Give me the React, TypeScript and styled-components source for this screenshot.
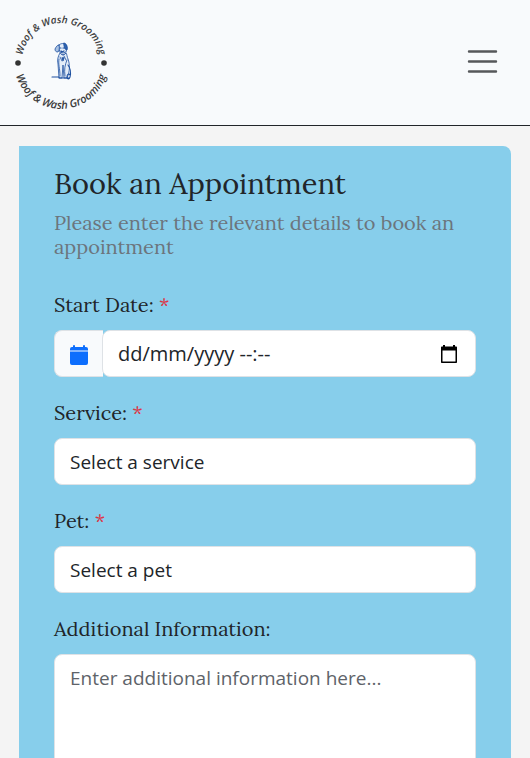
import React from "react";
import styled, { createGlobalStyle, css } from "styled-components";

const serif = `Lora, "Liberation Serif", serif`;
const sans = `"Segoe UI", "Open Sans", "Noto Sans", sans-serif`;

const GlobalStyle = createGlobalStyle`
  *, *::before, *::after { box-sizing: border-box; }
  body {
    margin: 0;
    background: #f4f4f4;
    color: #212529;
    font-family: ${serif};
  }
`;

const Header = styled.header`
  display: flex;
  align-items: center;
  justify-content: space-between;
  padding: 0 32px 2px 11px;
  height: 126px;
  background: #f8fafc;
  border-bottom: 1px solid #212529;
`;

const LogoLink = styled.a`
  display: block;
  line-height: 0;
`;

const LogoText = styled.text`
  font-family: "Open Sans", sans-serif;
  font-weight: 600;
  font-style: italic;
  fill: #3c3c3c;
`;

const MenuButton = styled.button`
  display: flex;
  padding: 0;
  border: 0;
  background: transparent;
  cursor: pointer;
`;

const Main = styled.main`
  padding: 20px 19px;
`;

const Card = styled.form`
  padding: 20px 35px 35px;
  background: #87ceeb;
  border-radius: 0 8px 8px 0;
`;

const Title = styled.h2`
  margin: 0 0 9px;
  font-size: 29px;
  font-weight: 400;
  line-height: 36px;
`;

const Subtitle = styled.p`
  margin: 0 0 31px;
  font-size: 20px;
  line-height: 24px;
  color: #6c757d;
`;

const Field = styled.div`
  margin-bottom: 21px;
`;

const Label = styled.label`
  display: block;
  margin-bottom: 10px;
  font-size: 20px;
  line-height: 30px;
`;

const Required = styled.span`
  color: #dc3545;
`;

const control = css`
  display: block;
  width: 100%;
  height: 47px;
  margin: 0;
  padding: 8px 15px;
  border: 1px solid #dee2e6;
  border-radius: 8px;
  background: #fff;
  color: #212529;
  font-family: ${sans};
  font-size: 19px;
  line-height: 30px;
`;

const Select = styled.select`
  ${control}
  appearance: none;
`;

const TextArea = styled.textarea`
  ${control}
  height: auto;
  resize: vertical;
  &::placeholder { color: #5e6369; opacity: 1; }
`;

const InputGroup = styled.div`
  display: flex;
`;

const GroupIcon = styled.span`
  display: flex;
  flex: none;
  align-items: center;
  justify-content: center;
  width: 49px;
  padding-top: 2px;
  background: #f8fafc;
  border: 1px solid #dee2e6;
  border-right: 0;
  border-radius: 8px 0 0 8px;
`;

const DateBox = styled.div`
  position: relative;
  flex: 1;
  min-width: 0;
  margin-left: -1px;
`;

const DateInput = styled.input`
  ${control}
  padding-right: 48px;
  font-size: 20px;
  &::placeholder { color: #212529; opacity: 1; }
`;

const PickerButton = styled.button`
  position: absolute;
  inset: 0 18px 0 auto;
  display: flex;
  align-items: center;
  padding: 0;
  border: 0;
  background: transparent;
  cursor: pointer;
`;

function Logo() {
  return (
    <svg width="100" height="104" viewBox="0 0 100 104" role="img" aria-label="Woof & Wash Grooming">
      <defs>
        <path id="arc-top" d="M11 52 A39 39 0 0 1 89 52" />
        <path id="arc-bottom" d="M3 52 A47 47 0 0 0 97 52" />
      </defs>
      <LogoText fontSize="10" textAnchor="middle">
        <textPath href="#arc-top" startOffset="50%">Woof &amp; Wash Grooming</textPath>
      </LogoText>
      <LogoText fontSize="11" textAnchor="middle">
        <textPath href="#arc-bottom" startOffset="50%">Woof &amp; Wash Grooming</textPath>
      </LogoText>
      <circle cx="7" cy="53" r="2.8" fill="#333" />
      <circle cx="93" cy="53" r="2.8" fill="#333" />
      <g fill="none" stroke="#1d4f9f" strokeWidth="0.8" strokeLinecap="round" strokeLinejoin="round">
        <path d="M48 35c2-2 5-2 7 0l1 3-1 4-3 1-3-1-1-3z" fill="#e4edf8" />
        <path d="M48 35c-2 0-3 2-4 4 0 2 1 3 3 3 1-1 2-4 1-7z" fill="#a9c2e4" />
        <path d="M53 33c2 0 4 3 3 7l-2-1-1-3z" fill="#2e62ae" />
        <path d="M49 38h1m2 0h1m-3 3 1 1 2-1" strokeWidth="1.2" />
        <path d="M49 43c-2 3-3 7-2 11l1 14h3l1-13 1 13h3c3-6 3-14 1-19-1-2-1-5-2-6-2 2-4 2-6 0z" fill="#e4edf8" />
        <path d="M50 44c2 2 3 1 5-1m-6 4 2 4m2-5 2 4m-7-1c-1 6 1 9 1 17m7-16c-2 5-3 9-2 16" />
        <path d="m51 48 1 3 1-3z" fill="#1d4f9f" />
        <path d="M57 55c3 4 3 8 2 12-1 3-3 2-3 0 0-3 2-4 3-2M41 67h7m0 1h10" strokeWidth="1.1" />
      </g>
    </svg>
  );
}

function StarLabel({ htmlFor, children }: { htmlFor: string; children: React.ReactNode }) {
  return (
    <Label htmlFor={htmlFor}>
      {children} <Required>*</Required>
    </Label>
  );
}

export default function App() {
  return (
    <>
      <GlobalStyle />
      <Header>
        <LogoLink href="#" aria-label="Woof & Wash Grooming home">
          <Logo />
        </LogoLink>
        <MenuButton type="button" aria-label="Toggle navigation">
          <svg width="32" height="26" viewBox="0 0 32 26" fill="none" stroke="#56585a" strokeWidth="2.4" strokeLinecap="round">
            <path d="M3 2.500h27M3 12.500h27M3 22.500h27" />
          </svg>
        </MenuButton>
      </Header>
      <Main>
        <Card>
          <Title>Book an Appointment</Title>
          <Subtitle>Please enter the relevant details to book an appointment</Subtitle>
          <Field>
            <StarLabel htmlFor="start">Start Date:</StarLabel>
            <InputGroup>
              <GroupIcon>
                <svg width="18" height="20" viewBox="0 0 18 20" fill="#0d6efd">
                  <path d="M3 1a1 1 0 0 1 2 0v1h8V1a1 1 0 0 1 2 0v1h1a2 2 0 0 1 2 2v1.500H0V4a2 2 0 0 1 2-2h1zM0 6.500h18V18a2 2 0 0 1-2 2H2a2 2 0 0 1-2-2z" />
                </svg>
              </GroupIcon>
              <DateBox>
                <DateInput id="start" type="text" placeholder="dd/mm/yyyy --:--" />
                <PickerButton type="button" aria-label="Open date picker">
                  <svg width="18" height="20" viewBox="0 0 18 20" fill="#000">
                    <path d="M16 2.500h-1V1h-2v1.500H5V1H3v1.500H2c-.600 0-1 .400-1 1V18c0 .600.400 1 1 1h14c.600 0 1-.400 1-1V3.500c0-.600-.400-1-1-1zM15.500 17.500h-13V6.500h13z" />
                  </svg>
                </PickerButton>
              </DateBox>
            </InputGroup>
          </Field>
          <Field>
            <StarLabel htmlFor="service">Service:</StarLabel>
            <Select id="service">
              <option>Select a service</option>
            </Select>
          </Field>
          <Field>
            <StarLabel htmlFor="pet">Pet:</StarLabel>
            <Select id="pet">
              <option>Select a pet</option>
            </Select>
          </Field>
          <Field>
            <Label htmlFor="info">Additional Information:</Label>
            <TextArea id="info" rows={5} placeholder="Enter additional information here..." />
          </Field>
        </Card>
      </Main>
    </>
  );
}
